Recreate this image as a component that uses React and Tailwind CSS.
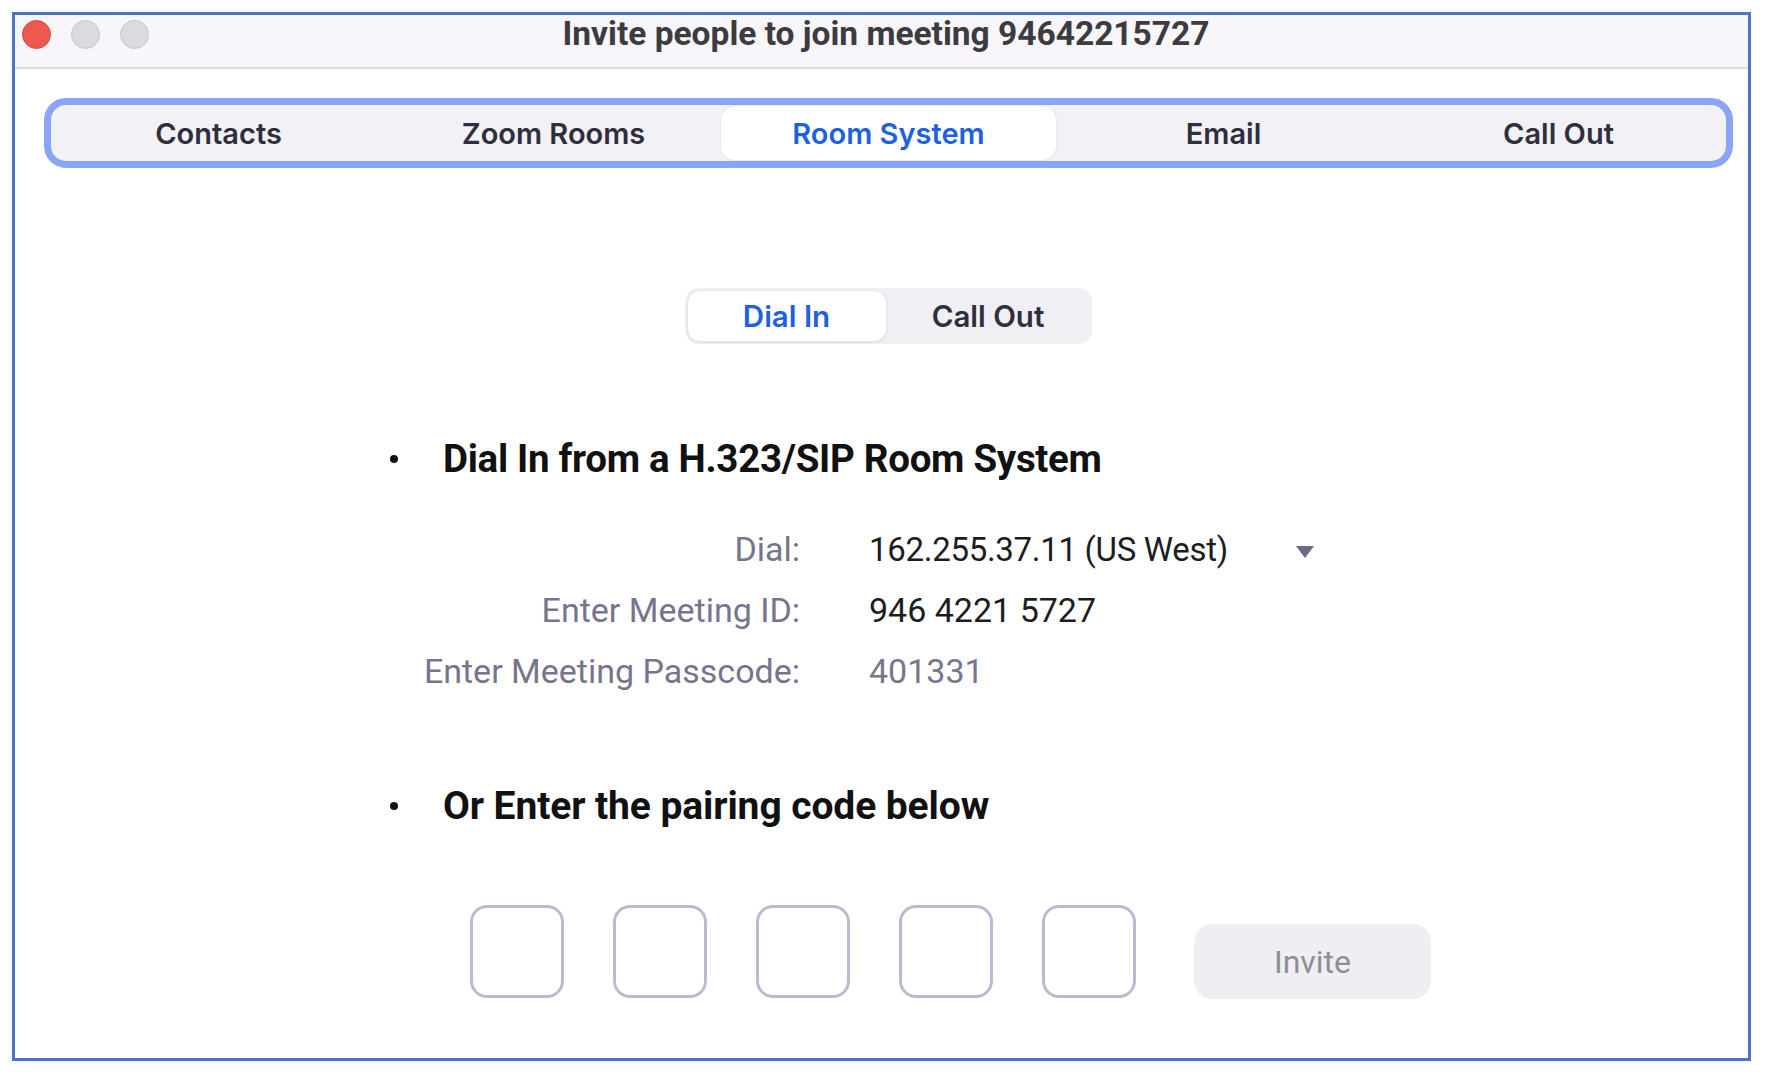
export default function App() {
  const tabs = ["Contacts", "Zoom Rooms", "Room System", "Email", "Call Out"];
  const inter = { fontFamily: "Inter, 'Noto Sans', sans-serif" };
  const roboto = { fontFamily: "Roboto, 'Liberation Sans', sans-serif" };
  return (
    <div className="w-[1766px] h-[1074px] bg-white pt-[12px] pl-[12px]">
      <div className="w-[1739px] h-[1049px] border-[3px] border-[#4e74c6] bg-white flex flex-col">
        {/* title bar */}
        <div className="h-[54px] shrink-0 bg-[#f8f6fa] border-b-2 border-[#dddce2] grid grid-cols-[1fr_auto_1fr] items-center pb-[15px]">
          <div className="flex items-center gap-[20px] pl-[7px]">
            <div className="w-[29px] h-[29px] rounded-full bg-[#ec5a4f] border border-[#d5483e]" />
            <div className="w-[29px] h-[29px] rounded-full bg-[#dbdadf] border border-[#c6c5cb]" />
            <div className="w-[29px] h-[29px] rounded-full bg-[#dbdadf] border border-[#c6c5cb]" />
          </div>
          <div className="pl-[9px] text-[33.5px] leading-[38px] font-bold text-[#3b3b40]" style={roboto}>
            Invite people to join meeting 94642215727
          </div>
          <div />
        </div>

        {/* main tabs */}
        <div className="mt-[29px] ml-[29px] mr-[15px] h-[70px] rounded-[22px] border-[7px] border-[#8ba5f6] bg-[#f2f1f6] flex items-stretch py-[1px]">
          {tabs.map((t, i) => (
            <div
              key={t}
              className={
                "flex-1 flex items-center justify-center text-[29px] font-semibold rounded-[14px] pt-[2px] " +
                (i === 2 ? "bg-white text-[#1c62e0] shadow-[0_0_2px_rgba(0,0,0,0.12)]" : "text-[#2f2e3d]")
              }
              style={inter}
            >
              {t}
            </div>
          ))}
        </div>

        {/* segmented */}
        <div className="mt-[120px] flex justify-center pl-[13px]">
          <div className="h-[56px] w-[407px] bg-[#f0eff4] rounded-[14px] flex p-[2px]">
            <div className="w-[200px] bg-white rounded-[13px] border border-[#e6e5ec] shadow-[0_1px_2px_rgba(0,0,0,0.06)] flex items-center justify-center text-[29.5px] font-semibold text-[#1c62e0]" style={inter}>
              Dial In
            </div>
            <div className="flex-1 flex items-center justify-center text-[29.5px] font-semibold text-[#2f2e3d]" style={inter}>
              Call Out
            </div>
          </div>
        </div>

        {/* content */}
        <div className="pl-[375px] flex flex-col" style={roboto}>
          <div className="mt-[95px] h-[40px] flex items-center">
            <span className="w-[8px] h-[8px] rounded-full bg-[#111]" />
            <span className="ml-[45px] text-[38.5px] font-bold text-[#111] tracking-[-0.3px]">Dial In from a H.323/SIP Room System</span>
          </div>

          <div className="mt-[40px] flex flex-col text-[34px]">
            <div className="h-[61px] flex items-center">
              <div className="w-[410px] text-right text-[#77758e]">Dial:</div>
              <div className="ml-[69px] w-[426px] text-[#1d1d1f] text-[33px] tracking-[-0.3px]">162.255.37.11 (US West)</div>
              <svg width="20" height="14" viewBox="0 0 20 14" className="mt-[4px]">
                <path d="M1 1 L19 1 L10 13 Z" fill="#6e6c85" />
              </svg>
            </div>
            <div className="h-[61px] flex items-center">
              <div className="w-[410px] text-right text-[#77758e]">Enter Meeting ID:</div>
              <div className="ml-[69px] text-[#1d1d1f]">946 4221 5727</div>
            </div>
            <div className="h-[61px] flex items-center">
              <div className="w-[410px] text-right text-[#77758e]">Enter Meeting Passcode:</div>
              <div className="ml-[69px] text-[#78768c]">401331</div>
            </div>
          </div>

          <div className="mt-[84px] h-[40px] flex items-center">
            <span className="w-[8px] h-[8px] rounded-full bg-[#111]" />
            <span className="ml-[45px] text-[39px] font-bold text-[#111] tracking-[-0.1px]">Or Enter the pairing code below</span>
          </div>

          <div className="mt-[79px] ml-[80px] flex items-end">
            <div className="flex gap-[49px] mb-[1px]">
              {[0, 1, 2, 3, 4].map((i) => (
                <div key={i} className="w-[94px] h-[93px] rounded-[17px] border-[3px] border-[#bcbad0] bg-white" />
              ))}
            </div>
            <div className="ml-[58px] w-[237px] h-[75px] rounded-[18px] bg-[#efeef3] flex items-center justify-center text-[32px] text-[#8e8e93]">
              Invite
            </div>
          </div>
        </div>
      </div>
    </div>
  );
}
